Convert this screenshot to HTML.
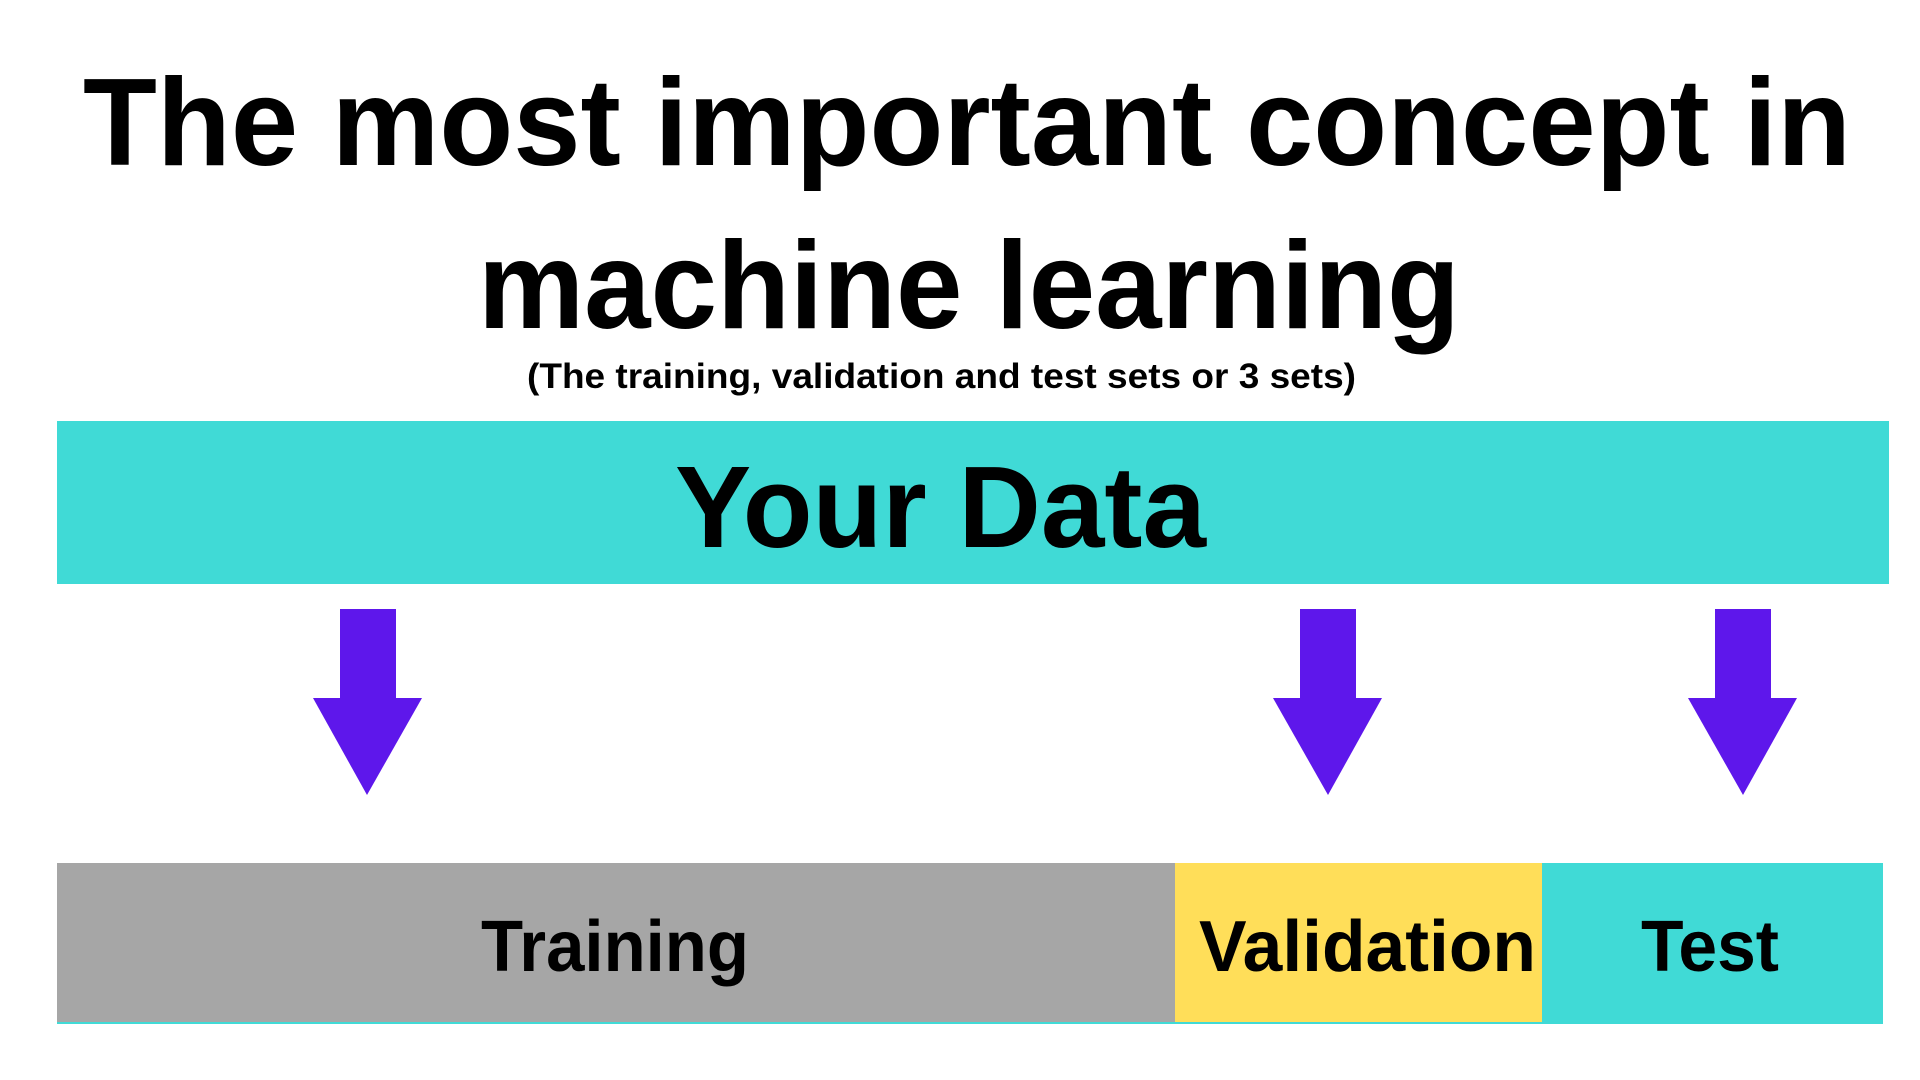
<!DOCTYPE html>
<html><head><style>html,body{margin:0;padding:0;background:#fff;}svg{display:block}</style></head>
<body>
<svg width="1920" height="1080" viewBox="0 0 1920 1080" xmlns="http://www.w3.org/2000/svg" font-family="'Liberation Sans', sans-serif" font-weight="bold">
<rect width="1920" height="1080" fill="#fff"/>
<text x="83" y="165" font-size="124" textLength="1768" lengthAdjust="spacingAndGlyphs" fill="#000">The most important concept in</text>
<text x="478" y="328" font-size="124" textLength="982" lengthAdjust="spacingAndGlyphs" fill="#000">machine learning</text>
<text x="527" y="388" font-size="35" textLength="829" lengthAdjust="spacingAndGlyphs" fill="#000">(The training, validation and test sets or 3 sets)</text>
<rect x="57" y="421" width="1832" height="163" fill="#40DAD6"/>
<text x="675" y="547" font-size="116" textLength="531" lengthAdjust="spacingAndGlyphs" fill="#000">Your Data</text>
<g fill="#5E17EB">
<rect x="340" y="609" width="56" height="89"/><polygon points="313,698 422,698 367,795"/>
<rect x="1300" y="609" width="56" height="89"/><polygon points="1273,698 1382,698 1328,795"/>
<rect x="1715" y="609" width="56" height="89"/><polygon points="1688,698 1797,698 1743,795"/>
</g>
<rect x="57" y="863" width="1118" height="161" fill="#A6A6A6"/>
<rect x="1175" y="863" width="367" height="161" fill="#FFDE59"/>
<rect x="1542" y="863" width="341" height="161" fill="#40DAD6"/>
<rect x="57" y="1022" width="1826" height="2" fill="#40DAD6"/>
<text x="481" y="971" font-size="72" textLength="268" lengthAdjust="spacingAndGlyphs" fill="#000">Training</text>
<text x="1199" y="971" font-size="72" textLength="337" lengthAdjust="spacingAndGlyphs" fill="#000">Validation</text>
<text x="1641" y="971" font-size="72" textLength="138" lengthAdjust="spacingAndGlyphs" fill="#000">Test</text>
</svg>
</body></html>
